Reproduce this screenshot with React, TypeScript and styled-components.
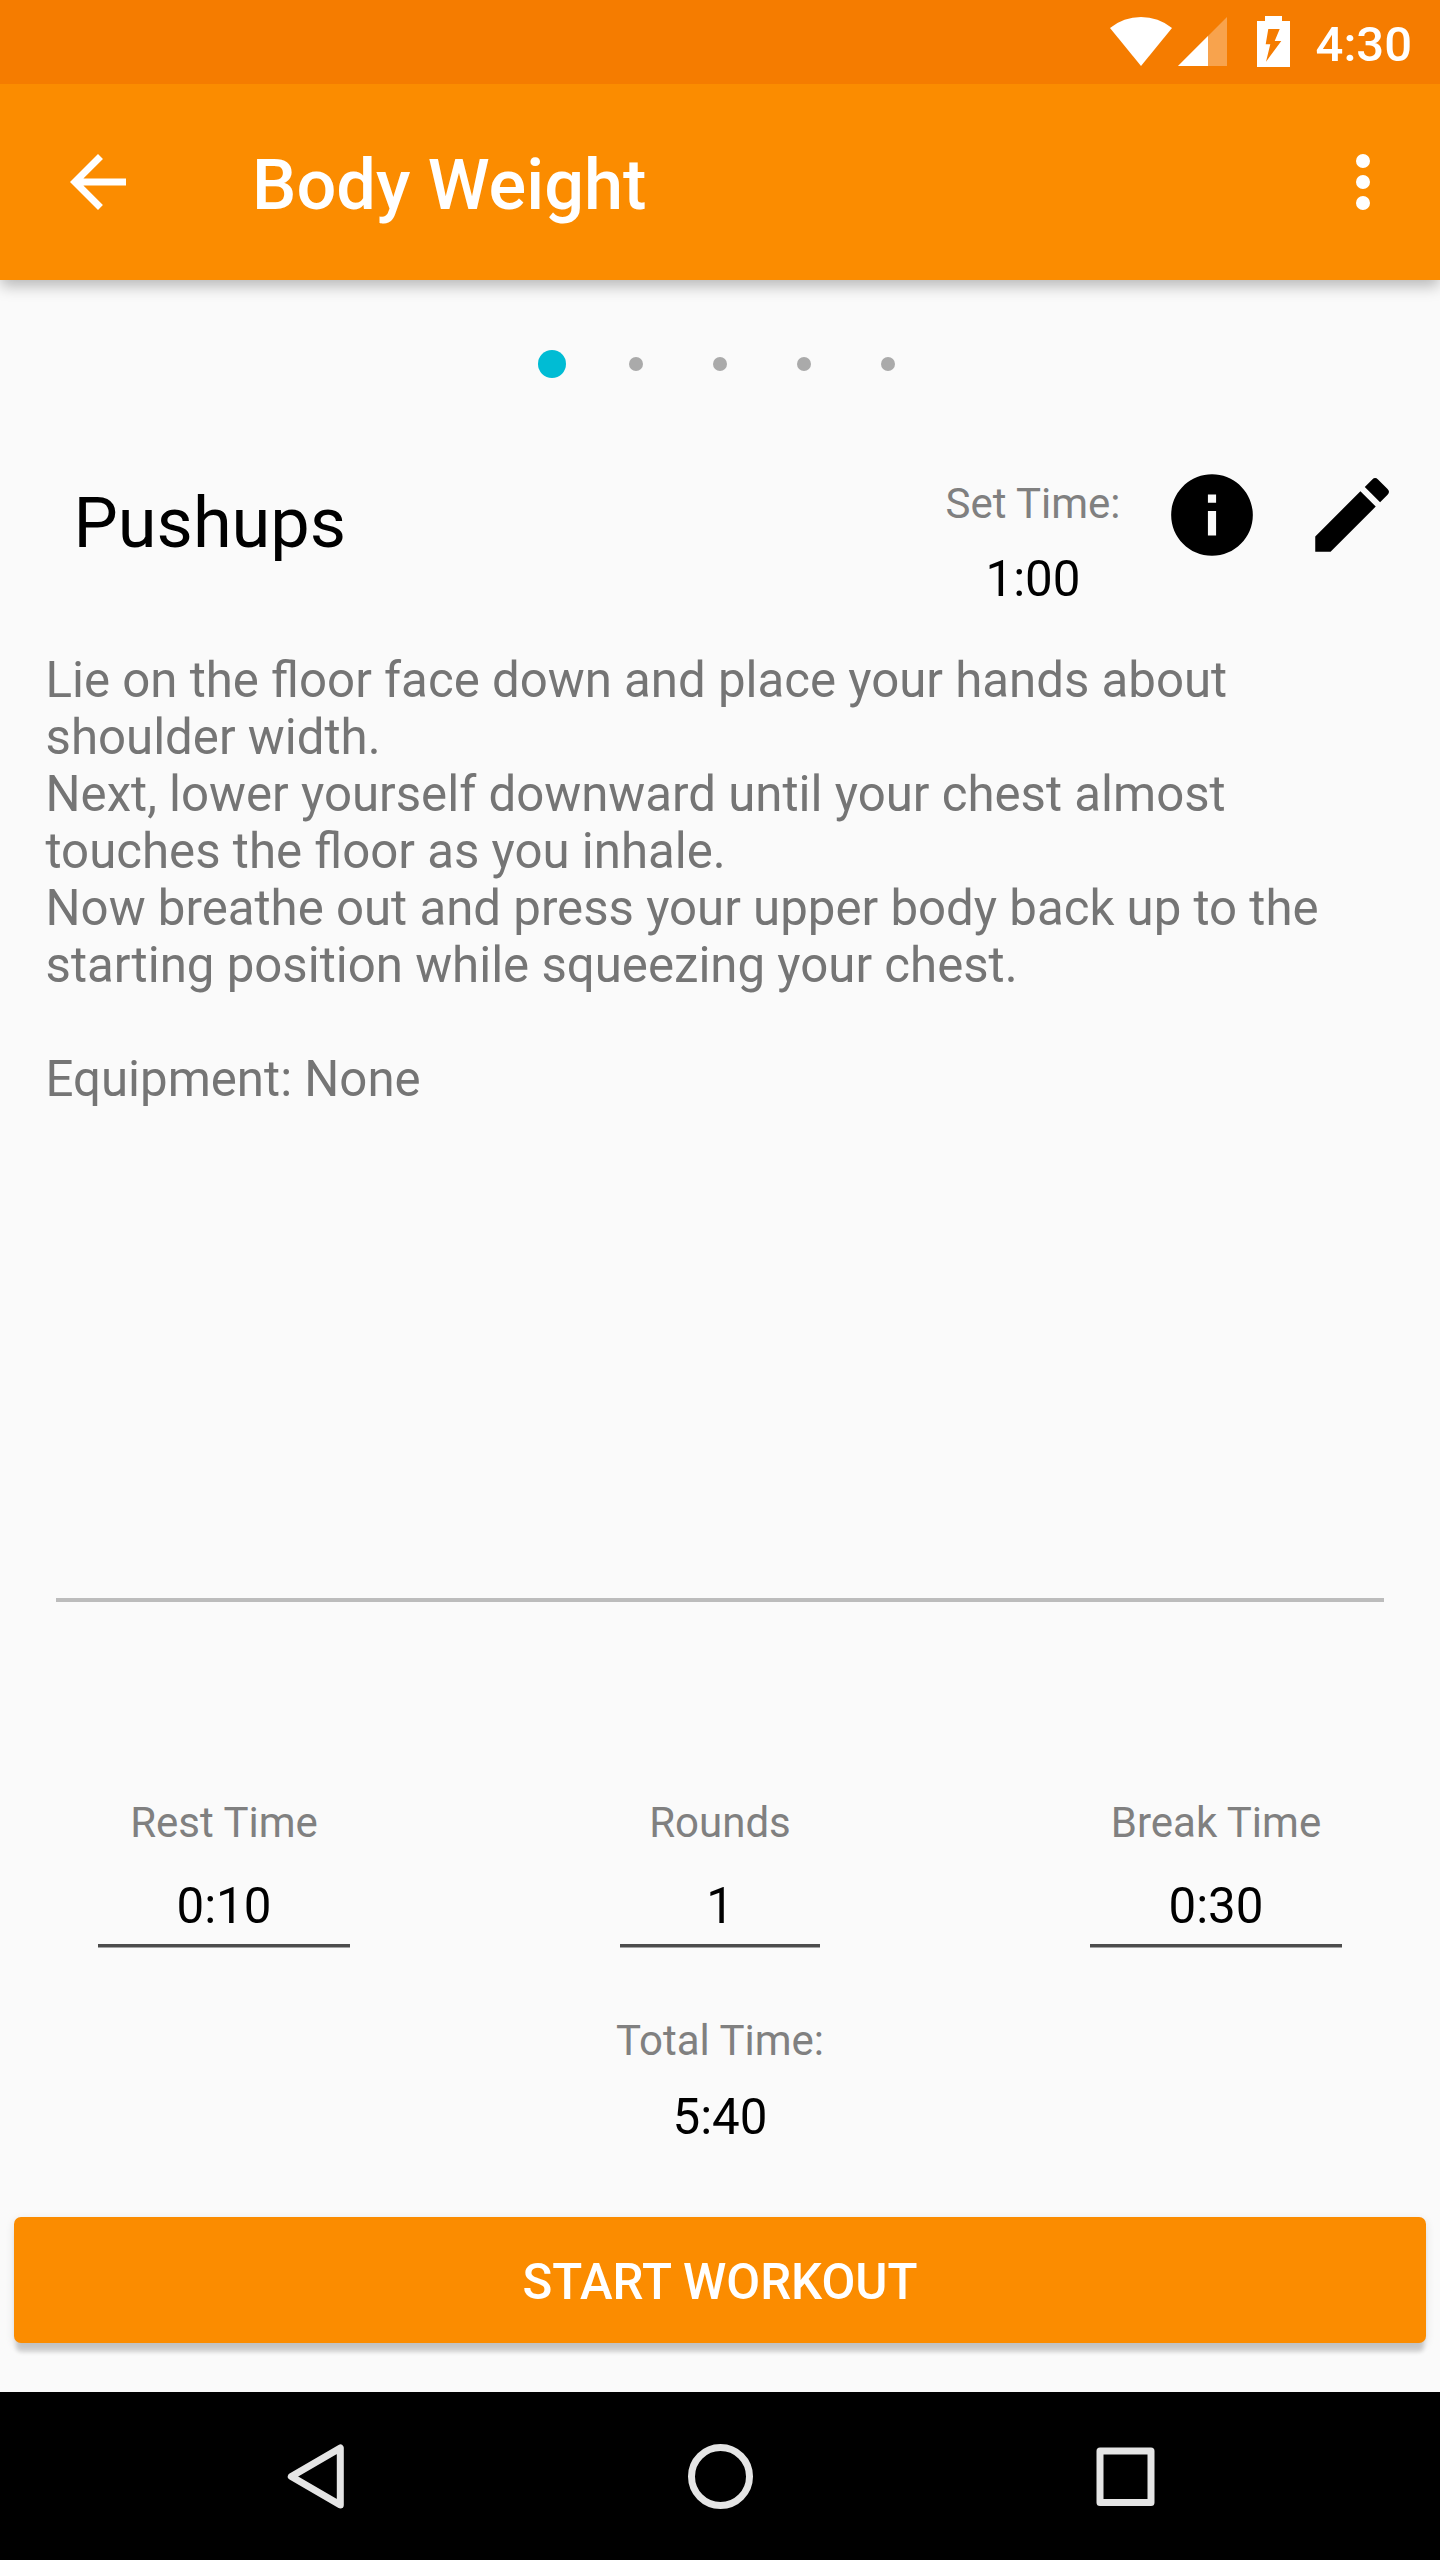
import React from "react";
import styled, { createGlobalStyle } from "styled-components";

const Global = createGlobalStyle`
  *, *::before, *::after { box-sizing: border-box; }
  body { margin: 0; background: #fafafa; font-family: Roboto, "Noto Sans", sans-serif; }
  svg { display: block; }
`;

const Screen = styled.div`
  width: 1440px;
  height: 2560px;
  display: flex;
  flex-direction: column;
  background: #fafafa;
  color: #000;
`;

const StatusBar = styled.header`
  height: 84px;
  flex: none;
  display: flex;
  justify-content: flex-end;
  align-items: flex-start;
  padding: 16px 28px 0 0;
  background: #f57c00;
  color: #fff;
`;

const StatusIcon = styled.svg<{ $gap: number }>`
  flex: none;
  overflow: visible;
  margin-right: ${(p) => p.$gap}px;
`;

const Clock = styled.span`
  margin-top: 1px;
  font-size: 49px;
  font-weight: 500;
  line-height: 56px;
`;

const Toolbar = styled.nav`
  height: 196px;
  flex: none;
  display: flex;
  align-items: center;
  padding: 0 35px 0 56px;
  background: #fb8c00;
  color: #fff;
  box-shadow: 0 7px 14px -1px rgba(0, 0, 0, 0.27);
  clip-path: inset(0 0 -40px 0);
`;

const ToolbarTitle = styled.h1`
  flex: 1;
  margin: 6px 0 0 112px;
  font-size: 70.3px;
  font-weight: 500;
  line-height: 82px;
`;

const IconButton = styled.button`
  padding: 0;
  border: 0;
  background: none;
  color: inherit;
`;

const Pager = styled.div`
  height: 168px;
  flex: none;
  display: flex;
  justify-content: center;
  align-items: center;
`;

const PageSlot = styled.span`
  width: 84px;
  display: flex;
  justify-content: center;
`;

const PageDot = styled.span<{ $active: boolean }>`
  width: ${(p) => (p.$active ? 28 : 14)}px;
  height: ${(p) => (p.$active ? 28 : 14)}px;
  border-radius: 50%;
  background: ${(p) => (p.$active ? "#00bcd4" : "#aaa")};
`;

const ExerciseHeader = styled.section`
  height: 204px;
  flex: none;
  display: flex;
  align-items: flex-start;
  padding: 18px 39px 0 73.5px;
`;

const ExerciseName = styled.h2`
  flex: 1;
  margin: 16px 0 0;
  font-size: 70.3px;
  font-weight: 400;
  line-height: 82px;
`;

const SetTime = styled.div`
  width: 200px;
  margin: 13px 30px 0 0;
  display: flex;
  flex-direction: column;
  align-items: center;
  gap: 21px;
`;

const Actions = styled.div`
  display: flex;
  gap: 42px;
`;

const Label = styled.span`
  font-size: 42px;
  line-height: 50px;
  color: #808080;
  white-space: nowrap;
`;

const Value = styled.span`
  display: block;
  font-size: 49.3px;
  line-height: 58px;
`;

const Description = styled.p`
  height: 946px;
  flex: none;
  margin: 0;
  padding: 0 45.5px;
  font-size: 49.2px;
  line-height: 57px;
  color: #757575;
  white-space: pre-line;
`;

const Divider = styled.hr`
  width: 1328px;
  height: 4px;
  flex: none;
  margin: 0 auto;
  border: 0;
  background: #bcbcbc;
`;

const Settings = styled.section`
  display: flex;
  justify-content: space-between;
  padding: 196px 98px 0;
`;

const Field = styled.div<{ $width: number }>`
  width: ${(p) => p.$width}px;
  display: flex;
  flex-direction: column;
  align-items: center;
`;

const FieldInput = styled.div`
  width: 100%;
  height: 71px;
  margin-top: 29px;
  text-align: center;
  box-shadow: inset 0 -1px #a3a3a3, inset 0 -4px #4c4c4c;
`;

const Total = styled.section`
  display: flex;
  flex-direction: column;
  align-items: center;
  gap: 22px;
  margin-top: 68px;
`;

const StartButton = styled.button`
  height: 126px;
  flex: none;
  margin: 71px 14px 49px;
  padding: 4px 0 0;
  border: 0;
  border-radius: 7px;
  background: #fb8c00;
  color: #fff;
  font: 500 49.2px/58px Roboto, "Noto Sans", sans-serif;
  box-shadow: 0 11px 4px -2px rgba(0, 0, 0, 0.16), 0 3px 10px rgba(0, 0, 0, 0.11);
`;

const NavigationBar = styled.footer`
  height: 168px;
  flex: none;
  display: flex;
  justify-content: center;
  background: #000;
`;

const NavKey = styled.button`
  width: 405px;
  padding: 0;
  border: 0;
  background: none;
  display: flex;
  align-items: center;
  justify-content: center;
`;

const fields = [
  { label: "Rest Time", value: "0:10", width: 252 },
  { label: "Rounds", value: "1", width: 200 },
  { label: "Break Time", value: "0:30", width: 252 },
];

const instructions = `Lie on the floor face down and place your hands about shoulder width.
Next, lower yourself downward until your chest almost touches the floor as you inhale.
Now breathe out and press your upper body back up to the starting position while squeezing your chest.

Equipment: None`;

function Glyph({ size, d }: { size: number; d: string }) {
  return (
    <svg width={size} height={size} viewBox="0 0 24 24" fill="currentColor">
      <path d={d} />
    </svg>
  );
}

export default function App() {
  return (
    <>
      <Global />
      <Screen>
        <StatusBar>
          <StatusIcon $gap={6} width="62" height="51" fill="#fff">
            <path d="M31 50L0 12A49 49 0 0 1 62 12Z" />
          </StatusIcon>
          <StatusIcon $gap={30} width="49" height="51" fill="#fff">
            <path d="M49 1V50H0Z" opacity="0.3" />
            <path d="M30 20V50H0Z" />
          </StatusIcon>
          <StatusIcon $gap={26} width="33" height="51" fill="#fff" fillRule="evenodd">
            <path d="M8 0H25V5H33V51H0V5H8ZM11.3 13L8.7 28.3H13.3L9 45.7L24.3 25H17.7L22.7 13Z" />
          </StatusIcon>
          <Clock>4:30</Clock>
        </StatusBar>

        <Toolbar>
          <IconButton aria-label="Back">
            <Glyph size={84} d="M20 11H7.83l5.59-5.59L12 4l-8 8 8 8 1.41-1.41L7.83 13H20z" />
          </IconButton>
          <ToolbarTitle>Body Weight</ToolbarTitle>
          <IconButton aria-label="More options">
            <Glyph
              size={84}
              d="M12 8a2 2 0 1 0 0-4 2 2 0 0 0 0 4zm0 2a2 2 0 1 0 0 4 2 2 0 0 0 0-4zm0 6a2 2 0 1 0 0 4 2 2 0 0 0 0-4z"
            />
          </IconButton>
        </Toolbar>

        <Pager>
          {[0, 1, 2, 3, 4].map((page) => (
            <PageSlot key={page}>
              <PageDot $active={page === 0} />
            </PageSlot>
          ))}
        </Pager>

        <ExerciseHeader>
          <ExerciseName>Pushups</ExerciseName>
          <SetTime>
            <Label>Set Time:</Label>
            <Value>1:00</Value>
          </SetTime>
          <Actions>
            <IconButton aria-label="Info">
              <Glyph
                size={98}
                d="M12 2C6.48 2 2 6.48 2 12s4.48 10 10 10 10-4.48 10-10S17.52 2 12 2zm1 15h-2v-6h2v6zm0-8h-2V7h2v2z"
              />
            </IconButton>
            <IconButton aria-label="Edit">
              <Glyph
                size={98}
                d="M3 17.25V21h3.75L17.81 9.94l-3.75-3.75L3 17.25zM20.71 7.04a1 1 0 0 0 0-1.41l-2.34-2.34a1 1 0 0 0-1.41 0l-1.83 1.83 3.75 3.75 1.83-1.83z"
              />
            </IconButton>
          </Actions>
        </ExerciseHeader>

        <Description>{instructions}</Description>
        <Divider />

        <Settings>
          {fields.map((f) => (
            <Field key={f.label} $width={f.width}>
              <Label>{f.label}</Label>
              <FieldInput>
                <Value>{f.value}</Value>
              </FieldInput>
            </Field>
          ))}
        </Settings>

        <Total>
          <Label>Total Time:</Label>
          <Value>5:40</Value>
        </Total>

        <StartButton>START WORKOUT</StartButton>

        <NavigationBar>
          <NavKey aria-label="Back">
            <svg width="84" height="84" fill="none" stroke="#e5e5e5" strokeWidth="7" strokeLinejoin="round">
              <path d="M67.3 14L67.3 71L18.3 42.5Z" />
            </svg>
          </NavKey>
          <NavKey aria-label="Home">
            <svg width="84" height="84" fill="none" stroke="#e5e5e5" strokeWidth="7">
              <circle cx="42.5" cy="42.5" r="29" />
            </svg>
          </NavKey>
          <NavKey aria-label="Recents">
            <svg width="84" height="84" fill="none" stroke="#e5e5e5" strokeWidth="7" strokeLinejoin="round">
              <rect x="17" y="17" width="51" height="51.5" />
            </svg>
          </NavKey>
        </NavigationBar>
      </Screen>
    </>
  );
}
